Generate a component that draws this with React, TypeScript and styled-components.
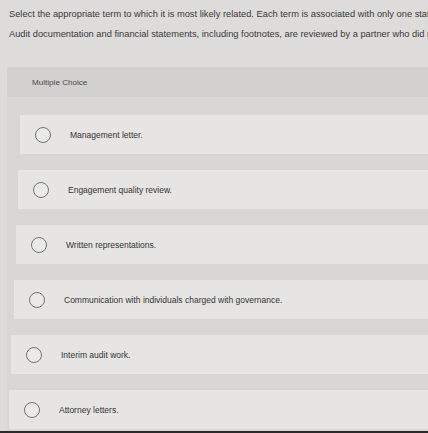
import styled, { createGlobalStyle } from "styled-components";

const GlobalStyle = createGlobalStyle`
  html, body {
    margin: 0;
    padding: 0;
    background: #dedcdb;
    font-family: "Liberation Sans", Arial, sans-serif;
  }
`;

const Page = styled.div`
  width: 428px;
  height: 433px;
  overflow: hidden;
  display: flex;
  flex-direction: column;
  background: #dedcdb;
  border-bottom: 2px solid #2a2a2a;
  box-sizing: border-box;
`;

const Prompt = styled.div`
  padding: 9px 0 0 9px;
  display: flex;
  flex-direction: column;
  gap: 10px;
  overflow: hidden;
`;

const PromptLine = styled.p`
  margin: 0;
  font-size: 9.3px;
  line-height: 10px;
  color: #383838;
  white-space: nowrap;
`;

const Panel = styled.section`
  margin: 28px 0 0 7px;
  flex: 1;
  background: #d6d4d3;
  display: flex;
  flex-direction: column;
`;

const PanelHeader = styled.div`
  height: 30px;
  display: flex;
  align-items: center;
  padding-left: 25px;
  font-size: 8.1px;
  color: #4a4a4a;
  background: #d3d1d0;
`;

const OptionList = styled.ul`
  list-style: none;
  margin: 0;
  padding: 18px 0 0 0;
  display: flex;
  flex-direction: column;
  gap: 16px;
  background: #d9d7d6;
  flex: 1;
`;

const Option = styled.li<{ $indent: number }>`
  height: 39px;
  margin-left: ${(p) => p.$indent}px;
  background: #e6e5e3;
  display: flex;
  align-items: center;
  padding-left: 15px;
  gap: 19px;
  font-size: 8.5px;
  color: #333333;
`;

const Radio = styled.span`
  width: 16px;
  height: 16px;
  border-radius: 50%;
  border: 1.2px solid #747474;
  box-sizing: border-box;
  flex-shrink: 0;
  background: #eaeae8;
`;

const options = [
  { label: "Management letter.", indent: 13 },
  { label: "Engagement quality review.", indent: 11 },
  { label: "Written representations.", indent: 9 },
  { label: "Communication with individuals charged with governance.", indent: 7 },
  { label: "Interim audit work.", indent: 4 },
  { label: "Attorney letters.", indent: 2 },
];

export default function App() {
  return (
    <Page>
      <GlobalStyle />
      <Prompt>
        <PromptLine>
          Select the appropriate term to which it is most likely related. Each term is associated with only one statement.
        </PromptLine>
        <PromptLine>
          Audit documentation and financial statements, including footnotes, are reviewed by a partner who did not participate in the engagement.
        </PromptLine>
      </Prompt>
      <Panel>
        <PanelHeader>Multiple Choice</PanelHeader>
        <OptionList>
          {options.map((o) => (
            <Option key={o.label} $indent={o.indent}>
              <Radio />
              {o.label}
            </Option>
          ))}
        </OptionList>
      </Panel>
    </Page>
  );
}
